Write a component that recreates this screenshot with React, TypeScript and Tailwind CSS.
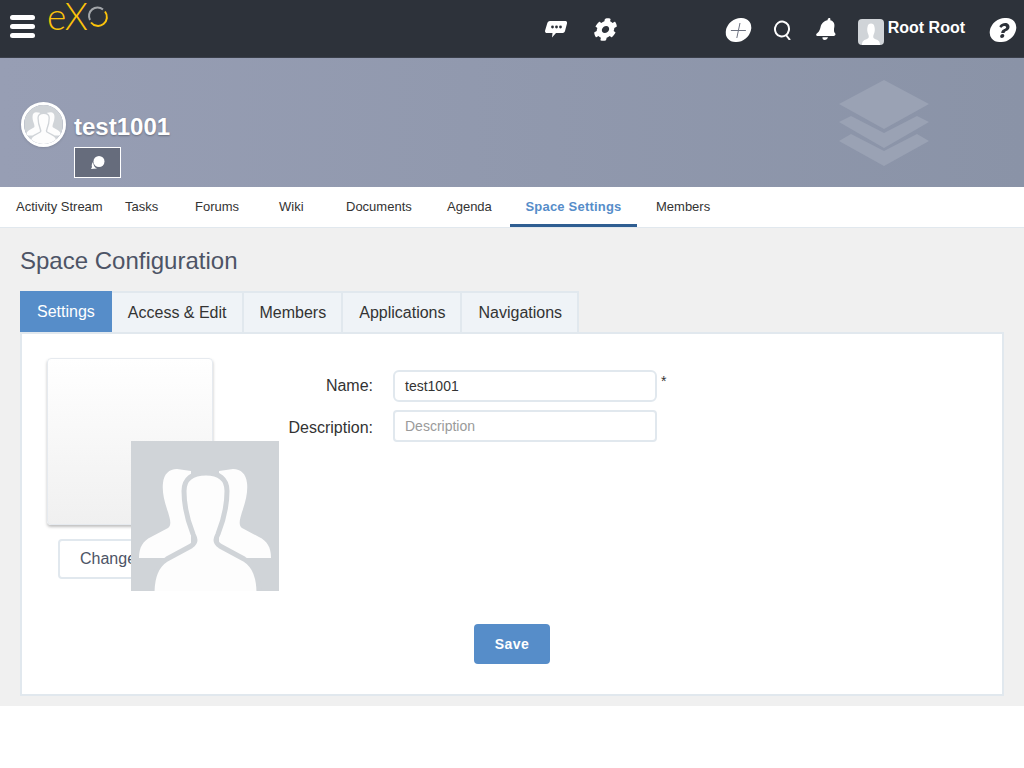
import { FaBell, FaCog, FaQuestion } from "react-icons/fa";

const navItems = [
  { label: "Activity Stream", className: "w-[125px] pl-4" },
  { label: "Tasks", className: "w-[70px]" },
  { label: "Forums", className: "w-[84px]" },
  { label: "Wiki", className: "w-[67px]" },
  { label: "Documents", className: "w-[101px]" },
  { label: "Agenda", className: "w-[63px]" },
];

const tabs = ["Access & Edit", "Members", "Applications", "Navigations"];

// Silhouette used for the space avatar (banner and overlapping picture)
const SpaceAvatar = ({ className }: { className: string }) => (
  <svg viewBox="0 0 148 150" className={className}>
    <rect width="148" height="150" fill="#d0d4d8" />
    <path
      d="M8 117C8 106 12 100 20 96L37 87C41 84 39 78 37 71C33 60 31 50 32 42C33 33 38 28 46 28L60 30L60 117ZM140 117C140 106 136 100 128 96L111 87C107 84 109 78 111 71C115 60 117 50 116 42C115 33 110 28 102 28L88 30L88 117Z"
      fill="#fdfdfd"
    />
    <path
      d="M21 153C21 136 25 125 36 118L60 105C66 101 64 97 62 93C56 78 53 62 53 50C53 38 61 32 75 32C88 32 96 38 96 50C96 62 93 78 87 93C85 97 83 101 89 105L113 118C124 125 128 136 128 153Z"
      fill="#fdfdfd"
      stroke="#d0d4d8"
      strokeWidth="5"
    />
  </svg>
);

const App = () => {
  return (
    <div className="min-h-[768px] bg-white font-['Liberation_Sans',Arial,sans-serif]">
      {/* Top bar */}
      <div className="flex h-[58px] items-start bg-[#2d323a] border-b border-[#3a3f4a] text-white">
        <div className="ml-[10px] mt-[15px] flex w-[25px] flex-col gap-1">
          <div className="h-[5px] rounded-sm bg-white" />
          <div className="h-[5px] rounded-sm bg-white" />
          <div className="h-[5px] rounded-sm bg-white" />
        </div>
        {/* Logo */}
        <div className="ml-3 flex h-[32px] items-start">
          <span className="font-['Lato',sans-serif] text-[37px] leading-[32px] font-light text-[#fcc30b] tracking-[-1px]">
            eX
          </span>
          <svg viewBox="0 0 22 22" className="mt-[6px] h-[22px] w-[22px]">
            <path d="M3 14A8.5 8.5 0 0 1 16 3.5" fill="none" stroke="#a3a6aa" strokeWidth="2" />
            <path d="M18 5.5A8.5 8.5 0 0 1 4 16.5" fill="none" stroke="#fcc30b" strokeWidth="2" />
          </svg>
        </div>

        {/* Center icons */}
        <svg viewBox="0 0 22 17" className="ml-[436px] mt-[21px] h-[17px] w-[22px]">
          <path d="M5 0H20C21.5 0 22.3 1 22 2.5L20 10C19.6 11.5 18.5 12 17 12H11L7 16.5L7.5 12H2C.5 12-.2 11 .1 9.5L2.2 2.5C2.6 1 3.5 0 5 0Z" fill="#fff" />
          <circle cx="7.5" cy="6" r="1.4" fill="#2d323a" />
          <circle cx="11.5" cy="6" r="1.4" fill="#2d323a" />
          <circle cx="15.5" cy="6" r="1.4" fill="#2d323a" />
        </svg>
        <FaCog className="ml-[27px] mt-[18px] -skew-x-12 text-[23px]" />

        {/* Right icons */}
        <div className="relative ml-[109px] mt-[18px] flex h-[24px] w-[25px] -skew-x-12 items-center justify-center rounded-full bg-white">
          <div className="absolute h-[1px] w-[15px] bg-[#6d7280]" />
          <div className="absolute h-[15px] w-[1px] bg-[#6d7280]" />
        </div>
        <svg viewBox="0 0 20 20" className="ml-[22px] mt-[20px] h-5 w-5">
          <ellipse cx="9" cy="9" rx="7" ry="7.5" transform="rotate(12 9 9)" fill="none" stroke="#fff" strokeWidth="2" />
          <path d="M13 15L17 20" stroke="#fff" strokeWidth="2" />
        </svg>
        <FaBell className="ml-[23px] mt-[18px] -skew-x-12 text-[22px]" />
        <div className="ml-5 mt-[19px] flex h-[26px] w-[26px] items-end justify-center overflow-hidden rounded-sm bg-[#d0d4d8]">
          <svg viewBox="0 0 26 26" className="h-[26px] w-[26px]">
            <path d="M4 26C4 22 6 21 9 20C11 19 11 18 10.5 16C9 13 9 10 9.5 8C10 5 11 4.5 13 4.5C15 4.5 16 5 16.5 8C17 10 17 13 15.5 16C15 18 15 19 17 20C20 21 22 22 22 26Z" fill="#fff" />
          </svg>
        </div>
        <span className="ml-1 mt-[19px] text-base leading-[18px] font-bold">Root Root</span>
        <div className="ml-[25px] mt-[18px] flex h-6 w-[26px] -skew-x-12 items-center justify-center rounded-full bg-white">
          <FaQuestion className="text-[15px] text-[#2d323a]" />
        </div>
      </div>

      {/* Space banner */}
      <div className="relative flex h-[129px] gap-2 bg-gradient-to-r from-[#979eb4] to-[#8a93a7] pl-[21px] pt-[44px]">
        <div className="h-[45px] w-[45px] overflow-hidden rounded-full border-[3px] border-white shadow">
          <SpaceAvatar className="h-full w-full" />
        </div>
        <div className="flex flex-col">
          <div className="h-[45px] pt-[11px] text-2xl leading-[28px] font-bold text-white [text-shadow:0_1px_2px_rgba(0,0,0,0.3)]">
            test1001
          </div>
          <div className="flex h-[31px] w-[47px] items-center justify-center border border-white bg-[#666c7c]">
            <svg viewBox="0 0 16 16" className="h-4 w-4">
              <circle cx="9" cy="6.5" r="5.5" fill="#fff" />
              <path d="M3 7C1.5 9 1.5 11 2 12L1 14L7 13.5C5 13 3.5 10.5 3 7Z" fill="#fff" />
            </svg>
          </div>
        </div>
        <svg viewBox="0 0 92 88" className="absolute right-[93px] top-[22px] h-[88px] w-[92px]">
          <path d="M45 0L90 24L45 49L0 24Z" fill="#9aa2b4" />
          <path d="M0 42L12 36L45 53L78 36L90 42L45 68Z" fill="#9aa2b4" />
          <path d="M0 61L12 54L45 71L78 54L90 61L45 86Z" fill="#9aa2b4" />
        </svg>
      </div>

      {/* Space navigation */}
      <div className="flex h-[41px] border-b border-[#e1e8ee] bg-white text-[13px] text-[#333]">
        {navItems.map((item) => (
          <div key={item.label} className={`flex items-center ${item.className}`}>
            {item.label}
          </div>
        ))}
        <div className="flex w-[127px] items-center justify-center border-b-[3px] border-[#2f5e92] pt-[3px] font-bold tracking-[0.2px] text-[#568dc9]">
          Space Settings
        </div>
        <div className="ml-[19px] flex items-center">Members</div>
      </div>

      {/* Content */}
      <div className="bg-[#f0f0f0] px-5 pb-[10px] pt-[18px]">
        <h1 className="h-[45px] text-2xl leading-[30px] text-[#4d5466]">Space Configuration</h1>
        <div className="flex h-[41px] text-base text-[#333]">
          <div className="flex items-center bg-[#568dc9] px-[17px] text-white">Settings</div>
          {tabs.map((tab) => (
            <div
              key={tab}
              className="flex items-center border-t-2 border-r-2 border-[#e1e8ee] bg-[#eff3f7] pl-4 pr-[15px]"
            >
              {tab}
            </div>
          ))}
        </div>
        <div className="relative flex h-[364px] flex-col border-2 border-[#e1e8ee] bg-white">
          <div className="flex">
            <div className="ml-[25px] mt-6 w-[166px]">
              <div className="h-[167px] rounded border border-[#e6eaef] bg-gradient-to-b from-white to-[#f0f0f0] shadow-[0_2px_3px_rgba(0,0,0,0.25)]" />
              <div className="ml-[11px] mt-[14px] flex h-10 w-[144px] items-center rounded-sm border-2 border-[#e1e8ee] pl-5 text-base text-[#4d5466]">
                Change
              </div>
            </div>
            <div className="mt-9 flex-1 text-base text-[#333]">
              <div className="flex h-8 items-center">
                <label className="w-[160px] text-right">Name:</label>
                <div className="ml-5 flex h-8 w-[264px] items-center rounded-md border-2 border-[#e1e8ee] pl-[10px] text-sm">
                  test1001
                </div>
                <span className="ml-1 -mt-[10px] text-sm">*</span>
              </div>
              <div className="mt-2 flex h-8 items-center">
                <label className="w-[160px] text-right pt-[4px]">Description:</label>
                <div className="ml-5 flex h-8 w-[264px] items-center rounded-sm border-2 border-[#e1e8ee] pl-[10px] text-sm text-[#9a9a9a]">
                  Description
                </div>
              </div>
            </div>
          </div>
          <button className="mx-auto mt-auto mb-[30px] flex h-10 w-[76px] items-center justify-center rounded-sm bg-[#568dc9] text-sm font-bold tracking-[0.5px] text-white">
            Save
          </button>
          {/* Picture that spills over the avatar box */}
          <SpaceAvatar className="absolute left-[109px] top-[107px] h-[150px] w-[148px]" />
        </div>
      </div>
    </div>
  );
};

export default App;
